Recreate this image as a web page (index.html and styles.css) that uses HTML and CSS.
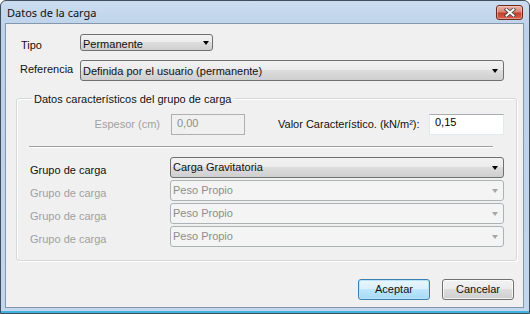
FILE: index.html
```html
<!DOCTYPE html>
<html lang="es">
<head>
	<meta charset="UTF-8">
	<title>Datos de la carga</title>
	<link rel="stylesheet" href="styles.css">
</head>
<body>
	<div class="window">
		<div class="titlebar">
			<span class="title">Datos de la carga</span>
			<a href="javascript:void(0);" class="close">
				<svg width="14" height="9" viewBox="0 0 14 9">
					<path d="M3.5 1.5 L10.5 7.5 M10.5 1.5 L3.5 7.5" stroke="#4a3a38" stroke-width="3.6" stroke-linecap="square"/>
					<path d="M3.5 1.5 L10.5 7.5 M10.5 1.5 L3.5 7.5" stroke="#fff" stroke-width="2" stroke-linecap="square"/>
				</svg>
			</a>
		</div>
		<div class="client">
			<div class="top">
				<div class="row row-tipo">
					<span class="label">Tipo</span>
					<div class="combo combo-tipo">
						<span class="combo-text">Permanente</span>
						<span class="arrow"></span>
					</div>
				</div>
				<div class="row row-ref">
					<span class="label">Referencia</span>
					<div class="combo combo-ref">
						<span class="combo-text">Definida por el usuario (permanente)</span>
						<span class="arrow"></span>
					</div>
				</div>
			</div>
			<fieldset class="group">
				<legend>Datos característicos del grupo de carga</legend>
				<div class="values">
					<span class="label-esp disabled">Espesor (cm)</span>
					<div class="input input-off">0,00</div>
					<span class="label-val">Valor Característico. (kN/m²):</span>
					<div class="input input-on">0,15</div>
				</div>
				<div class="sep"></div>
				<div class="grow">
					<span class="glabel">Grupo de carga</span>
					<div class="combo combo-g">
						<span class="combo-text">Carga Gravitatoria</span>
						<span class="arrow"></span>
					</div>
				</div>
				<div class="grow">
					<span class="glabel disabled">Grupo de carga</span>
					<div class="combo combo-g combo-off">
						<span class="combo-text">Peso Propio</span>
						<span class="arrow"></span>
					</div>
				</div>
				<div class="grow">
					<span class="glabel disabled">Grupo de carga</span>
					<div class="combo combo-g combo-off">
						<span class="combo-text">Peso Propio</span>
						<span class="arrow"></span>
					</div>
				</div>
				<div class="grow">
					<span class="glabel disabled">Grupo de carga</span>
					<div class="combo combo-g combo-off">
						<span class="combo-text">Peso Propio</span>
						<span class="arrow"></span>
					</div>
				</div>
			</fieldset>
			<div class="buttons">
				<button class="btn btn-default">Aceptar</button>
				<button class="btn">Cancelar</button>
			</div>
		</div>
	</div>
</body>
</html>
```

FILE: styles.css
```css
*{
	box-sizing: border-box;
}
html, body{
	margin: 0;
	padding: 0;
}
body{
	width: 530px;
	height: 314px;
	overflow: hidden;
	font-family: "Liberation Sans", Arial, sans-serif;
	font-size: 11px;
	color: #111;
}
.window{
	width: 530px;
	height: 314px;
	display: flex;
	flex-direction: column;
	border: 1px solid #3f4d5c;
	border-radius: 6px 6px 0 0;
	background: linear-gradient(#cadcef, #bcd1ea 30px, #c2d6ed);
	box-shadow: inset 0 -2px 0 #3fb3de;
}
.titlebar{
	height: 22px;
	display: flex;
	align-items: center;
	padding: 0 6px 0 6px;
}
.title{
	flex: 1;
	font-family: "Noto Sans", "Liberation Sans", sans-serif;
	font-size: 11px;
	line-height: 15px;
	color: #111;
	padding-top: 1px;
}
.close{
	width: 27px;
	height: 15px;
	display: flex;
	align-items: center;
	justify-content: center;
	border: 1px solid #6b2a21;
	border-radius: 3px;
	background: linear-gradient(#eab3a9, #d98a7d 42%, #c3412f 56%, #d7634e);
	box-shadow: inset 0 0 0 1px rgba(255,220,210,0.45);
}
.client{
	flex: 1;
	margin: 0 5px 5px 4px;
	border: 1px solid #8497ad;
	background-color: #f0f0f0;
	padding-top: 10px;
}
.top{
	padding-left: 14px;
}
.row{
	display: flex;
	align-items: flex-start;
}
.row-ref{
	margin-top: 8px;
}
.label{
	width: 60px;
	line-height: 13px;
}
.row-tipo .label{
	padding-left: 1px;
	padding-top: 5px;
}
.row-ref .label{
	padding-top: 3px;
}
.combo{
	display: flex;
	align-items: flex-start;
	border: 1px solid #707070;
	border-radius: 3px;
	background: linear-gradient(#f2f2f2, #ebebeb 50%, #dddddd 50%, #cfcfcf);
	padding: 0 5px 0 2px;
}
.combo-text{
	flex: 1;
	line-height: 13px;
	white-space: nowrap;
}
.arrow{
	align-self: center;
	margin-top: 1px;
	width: 0;
	height: 0;
	border-left: 3.5px solid transparent;
	border-right: 3.5px solid transparent;
	border-top: 4px solid #000;
}
.combo-tipo{
	width: 133px;
	height: 17px;
	padding-top: 3px;
	padding-right: 3px;
}
.combo-tipo .arrow{
	margin-top: -2px;
}
.combo-ref{
	width: 424px;
	height: 21px;
	padding-top: 4px;
}
.combo-ref .arrow{
	margin-top: -3px;
}
.group{
	margin: 9px 0 0 10px;
	width: 501px;
	padding: 8px 12px 13px 12px;
	border: 1px solid #d5d9dc;
	border-radius: 3px;
	box-shadow: inset 1px 1px 0 #fff, 1px 1px 0 #fff;
}
.group legend{
	padding: 2px 2px 0;
	margin-left: 3px;
	line-height: 14px;
	color: #111;
}
.values{
	display: flex;
	align-items: flex-start;
}
.label-esp{
	width: 131px;
	text-align: right;
	line-height: 13px;
	padding-top: 4px;
}
.disabled{
	color: #a0a0a0;
}
.input{
	height: 21px;
	line-height: 13px;
	padding: 2px 4px 0 5px;
	margin-left: 11px;
}
.input-off{
	width: 74px;
	border: 1px solid #afafaf;
	background-color: #f0f0f0;
	color: #8d8d8d;
}
.input-on{
	width: 75px;
	margin-left: auto;
	padding-top: 1px;
	border: 1px solid #e3e9ef;
	border-top-color: #abadb3;
	background-color: #fff;
	color: #000;
}
.label-val{
	margin-left: 33px;
	line-height: 13px;
	padding-top: 4px;
	white-space: nowrap;
}
.sep{
	margin: 11px 11px 0 0;
	height: 2px;
	border-top: 1px solid #a0a0a0;
	border-bottom: 1px solid #fff;
}
.grow{
	display: flex;
	align-items: flex-start;
	margin-top: 2px;
}
.sep + .grow{
	margin-top: 9px;
}
.glabel{
	width: 141px;
	padding-left: 1px;
	line-height: 13px;
	padding-top: 7px;
}
.combo-g{
	width: 334px;
	height: 21px;
	padding-top: 3px;
}
.combo-g .arrow{
	margin-top: -2px;
}
.combo-off{
	border-color: #adb2b5;
	background: #f4f4f4;
	color: #8d8d8d;
}
.combo-off .arrow{
	border-top-color: #a6a6a6;
}
.buttons{
	display: flex;
	justify-content: flex-end;
	gap: 12px;
	margin-top: 18px;
	padding-right: 9px;
}
.btn{
	width: 72px;
	height: 21px;
	padding: 0;
	font-family: inherit;
	font-size: 11px;
	line-height: 13px;
	color: #111;
	border: 1px solid #707070;
	border-radius: 3px;
	background: linear-gradient(#f2f2f2, #ebebeb 50%, #dddddd 50%, #cfcfcf);
	box-shadow: inset 0 0 0 1px rgba(255,255,255,0.7);
}
.btn-default{
	border-color: #3c7fb1;
	background: linear-gradient(#eaf6fd, #d9f0fc 50%, #bee6fd 50%, #a7d9f5);
	box-shadow: inset 0 0 0 1px #b8e4f9;
}
```
